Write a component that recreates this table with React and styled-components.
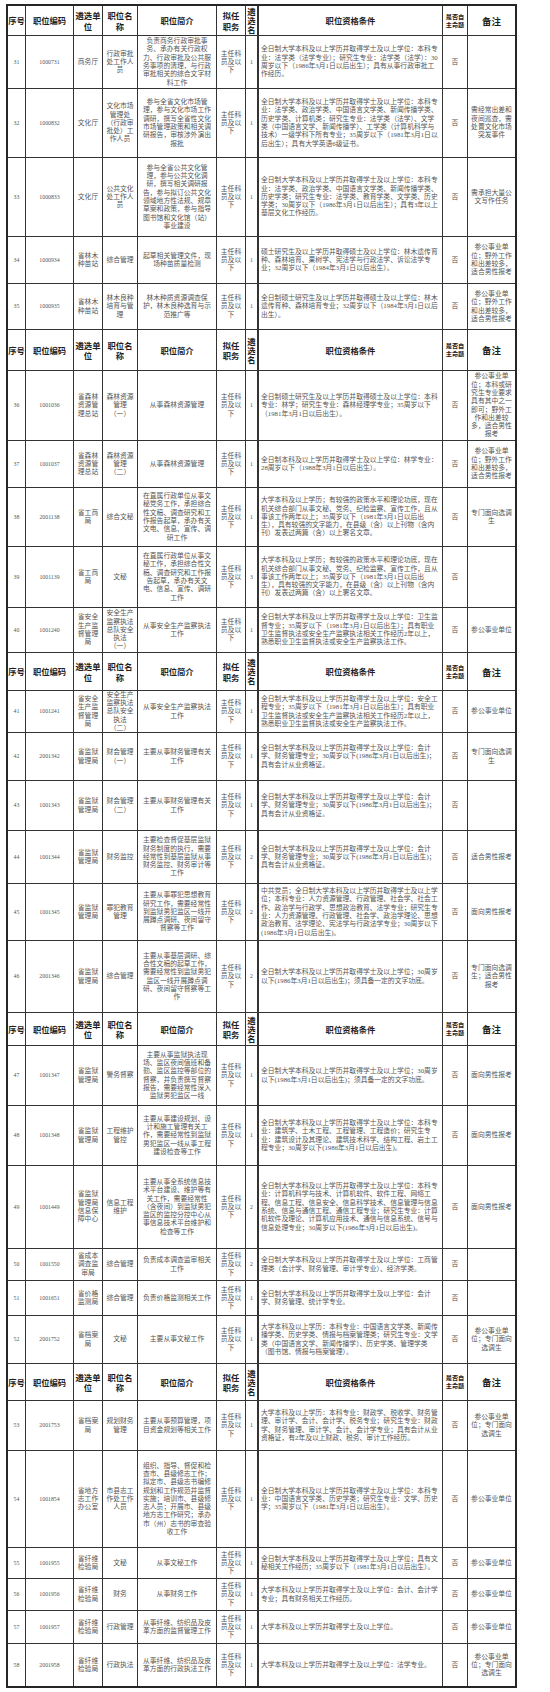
import React from "react";
import styled, { createGlobalStyle } from "styled-components";

const GlobalStyle = createGlobalStyle`
  html, body {
    margin: 0;
    padding: 0;
    background: #ffffff;
  }
  body {
    font-family: "Liberation Serif", "Noto Sans CJK SC", serif;
  }
`;

const COLS = "18px 48px 29px 35px 79px 29px 13px 184px 25px 47px";

const HEAD = [
  { lines: ["序号"] },
  { lines: ["职位编码"] },
  { lines: ["遴选单", "位"] },
  { lines: ["职位名", "称"] },
  { lines: ["职位简介"] },
  { lines: ["拟任", "职务"] },
  { lines: ["遴", "选", "名"], tight: true },
  { lines: ["职位资格条件"] },
  { lines: ["是否自", "主命题"], size: 6.2 },
  { lines: ["备注"], size: 9.5 },
];

const DUTY = "主任科员及以下";
const INSPECT = "全日制大学本科及以上学历并取得学士及以上学位：会计学、财务管理专业；30周岁以下(1986年3月1日以后出生)；具有会计从业资格证。";
const PRISON_WRITE = "全日制大学本科及以上学历并取得学士及以上学位；30周岁以下(1986年3月1日以后出生)；须具备一定的文字功底。";
const FOREST_NOTE = "参公事业单位；野外工作和出差较多，适合男性报考";
const SAFETY_INTRO = "从事安全生产监察执法工作";
const SAFETY_TAIL = "35周岁以下（1981年3月1日以后出生）；具有职业卫生监督执法或安全生产监察执法相关工作经历2年以上，熟悉职业卫生监督执法或安全生产监察执法工作。";
const AIC_COND = "大学本科及以上学历；有较强的政策水平和理论功底，现在机关综合部门从事文秘、党务、纪检监察、宣传工作，且从事该工作两年以上；35周岁以下（1981年3月1日以后出生），具有较强的文字能力，在县级（含）以上刊物（含内刊）发表过两篇（含）以上署名文章。";

const SECTIONS = [
  {
    head: 30,
    rows: [
      {
        no: "31", code: "1000731", unit: "商务厅", name: "行政审批处工作人员",
        intro: "负责商务行政审批事务、承办有关行政权力、行政审批及公共服务事项的清理，与行政审批相关的综合文字材料工作",
        count: "1",
        cond: "全日制大学本科及以上学历并取得学士及以上学位：本科专业：法学类（法学专业）；研究生专业：法学类（法学）：30周岁以下（1986年3月1日以后出生）；具有从事行政审批工作经历。",
        note: "", h: 53,
      },
      {
        no: "32", code: "1000832", unit: "文化厅", name: "文化市场管理处（行政审批处）工作人员",
        intro: "参与全省文化市场管理，参与文化市场工作调研，撰写全省性文化市场管理政策和相关调研报告，审核涉外演出报批",
        count: "1",
        cond: "全日制大学本科及以上学历并取得学士及以上学位：本科专业：法学类、政治学类、中国语言文学类、新闻传播学类、历史学类、计算机类；研究生专业：法学类（法学）、文学类（中国语言文学、新闻传播学）、工学类（计算机科学与技术）一级学科下所有专业；35周岁以下（1981年3月1日以后出生）；具有大学英语6级证书。",
        note: "需经常出差和夜间巡查，需处置文化市场突发事件", h: 69,
      },
      {
        no: "33", code: "1000833", unit: "文化厅", name: "公共文化处工作人员",
        intro: "参与全省公共文化管理，参与公共文化调研，撰写相关调研报告，参与拟订公共文化领域地方性法规、规章草案和政策，参与指导图书馆和文化馆（站）事业建设",
        count: "1",
        cond: "全日制大学本科及以上学历并取得学士及以上学位：本科专业：法学类、政治学类、中国语言文学类、新闻传播学类、历史学类；研究生专业：法学类、教育学类、文学类、历史学类；30周岁以下（1986年3月1日以后出生）；具有3年以上基层文化工作经历。",
        note: "需承担大量公文写作任务", h: 79,
      },
      {
        no: "34", code: "1000934", unit: "省林木种苗站", name: "综合管理",
        intro: "起草相关管理文件，现场种苗质量检测",
        count: "1",
        cond: "硕士研究生及以上学历并取得硕士及以上学位：林木遗传育种、森林培育、果树学、宪法学与行政法学、诉讼法学专业；32周岁以下（1984年3月1日以后出生）。",
        note: FOREST_NOTE, h: 47,
      },
      {
        no: "35", code: "1000935", unit: "省林木种苗站", name: "林木良种培育与管理",
        intro: "林木种质资源调查保护，林木良种选育与示范推广等",
        count: "1",
        cond: "全日制硕士研究生及以上学历并取得硕士及以上学位：林木遗传育种、森林培育专业；32周岁以下（1984年3月1日以后出生）。",
        note: FOREST_NOTE, h: 46,
      },
    ],
  },
  {
    head: 41,
    rows: [
      {
        no: "36", code: "1001036", unit: "省森林资源管理总站", name: "森林资源管理（一）",
        intro: "从事森林资源管理",
        count: "1",
        cond: "全日制硕士研究生及以上学历并取得硕士及以上学位：本科专业：林学；研究生专业：森林经理学专业；35周岁以下（1981年3月1日以后出生）。",
        note: "参公事业单位；本科或研究生专业要求具有其中之一即可；野外工作和出差较多，适合男性报考", h: 70,
      },
      {
        no: "37", code: "1001037", unit: "省森林资源管理总站", name: "森林资源管理（二）",
        intro: "从事森林资源管理",
        count: "1",
        cond: "全日制本科及以上学历并取得学士及以上学位：林学专业：28周岁以下（1988年3月1日以后出生）。",
        note: FOREST_NOTE, h: 47,
      },
      {
        no: "38", code: "2001138", unit: "省工商局", name: "综合文秘",
        intro: "在直属行政单位从事文秘党务工作，承担综合性文稿、调查研究和工作报告起草，承办有关文电、信息、宣传、调研工作",
        count: "1", cond: AIC_COND,
        note: "专门面向选调生", h: 59,
      },
      {
        no: "39", code: "1001139", unit: "省工商局", name: "文秘",
        intro: "在直属行政单位从事文秘工作，承担综合性文稿、调查研究和工作报告起草，承办有关文电、信息、宣传、调研工作",
        count: "3", cond: AIC_COND,
        note: "", h: 61,
      },
      {
        no: "40", code: "1001240", unit: "省安全生产监督管理局", name: "安全生产监察执法总队安全执法（一）",
        intro: SAFETY_INTRO,
        count: "1",
        cond: "全日制大学本科及以上学历并取得学士及以上学位：卫生监督专业；" + SAFETY_TAIL,
        note: "参公事业单位", h: 45,
      },
    ],
  },
  {
    head: 38,
    rows: [
      {
        no: "41", code: "1001241", unit: "省安全生产监督管理局", name: "安全生产监察执法总队安全执法（二）",
        intro: SAFETY_INTRO,
        count: "1",
        cond: "全日制大学本科及以上学历并取得学士及以上学位：安全工程专业；" + SAFETY_TAIL,
        note: "参公事业单位", h: 42,
      },
      {
        no: "42", code: "2001342", unit: "省监狱管理局", name: "财会管理（一）",
        intro: "主要从事财务管理有关工作",
        count: "1", cond: INSPECT,
        note: "专门面向选调生", h: 48,
      },
      {
        no: "43", code: "1001343", unit: "省监狱管理局", name: "财会管理（二）",
        intro: "主要从事财务管理有关工作",
        count: "1", cond: INSPECT,
        note: "", h: 50,
      },
      {
        no: "44", code: "1001344", unit: "省监狱管理局", name: "财务监控",
        intro: "主要检查督促基层监狱财务制度的执行，需要经常性到基层监狱从事财务监控、财务审计等工作",
        count: "2", cond: INSPECT,
        note: "适合男性报考", h: 53,
      },
      {
        no: "45", code: "1001345", unit: "省监狱管理局", name: "罪犯教育管理",
        intro: "主要从事罪犯思想教育研究工作，需要经常性到监狱男犯监区一线开展蹲点调研、夜间留守督察等工作",
        count: "2",
        cond: "中共党员；全日制大学本科及以上学历并取得学士及以上学位；本科专业：人力资源管理、行政管理、社会学、社会工作、政治学与行政学、思想政治教育、法学专业；研究生专业：人力资源管理、行政管理、社会学、政治学理论、思想政治教育、法学理论、宪法学与行政法学专业；30周岁以下(1986年3月1日以后出生)。",
        note: "面向男性报考", h: 57,
      },
      {
        no: "46", code: "2001346", unit: "省监狱管理局", name: "综合管理",
        intro: "主要从事基层调研、综合性文稿的起草工作，需要经常性到监狱男犯监区一线开展蹲点调研、夜间留守督察等工作",
        count: "2", cond: PRISON_WRITE,
        note: "专门面向选调生；适合男性报考", h: 72,
      },
    ],
  },
  {
    head: 33,
    rows: [
      {
        no: "47", code: "1001347", unit: "省监狱管理局", name: "警务督察",
        intro: "主要从事监狱执法现场、监区夜间值班和备勤、监区监控等部位的督察，并负责撰写督察报告，需要经常性深入监狱男犯监区一线",
        count: "1", cond: PRISON_WRITE,
        note: "面向男性报考", h: 60,
      },
      {
        no: "48", code: "1001348", unit: "省监狱管理局", name: "工程维护管控",
        intro: "主要从事建设规划、设计和施工管理有关工作，需要经常性到监狱男犯监区一线从事工程建设检查等工作",
        count: "1",
        cond: "全日制大学本科及以上学历并取得学士及以上学位：本科专业：建筑学、土木工程、工程管理、工程造价；研究生专业：建筑设计及其理论、建筑技术科学、结构工程、岩土工程专业；30周岁以下(1986年3月1日以后出生)。",
        note: "面向男性报考", h: 60,
      },
      {
        no: "49", code: "1001449", unit: "省监狱管理局信息保障中心", name: "信息工程维护",
        intro: "主要从事全系统信息技术平台建设、维护等有关工作，需要经常性（含夜间）到监狱男犯监区的监控分控中心从事信息技术平台维护和检查等工作",
        count: "2",
        cond: "全日制大学本科及以上学历并取得学士及以上学位：本科专业：计算机科学与技术、计算机软件、软件工程、网络工程、信息工程、信息安全、信息科学技术、信息管理与信息系统、信息与通信工程、通信工程专业；研究生专业：计算机软件及理论、计算机应用技术、通信与信息系统、信号与信息处理专业；30周岁以下(1986年3月1日以后出生)。",
        note: "面向男性报考", h: 83,
      },
      {
        no: "50", code: "1001550", unit: "省成本调查监审局", name: "综合管理",
        intro: "负责成本调查监审相关工作",
        count: "2",
        cond: "全日制大学本科及以上学历并取得学士及以上学位：工商管理类（会计学、财务管理、审计学专业）、经济学类。",
        note: "", h: 32,
      },
      {
        no: "51", code: "1001651", unit: "省价格监测局", name: "综合管理",
        intro: "负责价格监测相关工作",
        count: "1",
        cond: "全日制大学本科及以上学历并取得学士及以上学位：会计学、财务管理、统计学专业。",
        note: "", h: 35,
      },
      {
        no: "52", code: "2001752", unit: "省档案局", name: "文秘",
        intro: "主要从事文秘工作",
        count: "1",
        cond: "大学本科及以上学历：本科专业：中国语言文学类、新闻传播学类、历史学类、情报与档案管理类；研究生专业：文学类（中国语言文学、新闻传播学）、历史学类、管理学类（图书馆、情报与档案管理）。",
        note: "参公事业单位；专门面向选调生", h: 48,
      },
    ],
  },
  {
    head: 37,
    rows: [
      {
        no: "53", code: "2001753", unit: "省档案局", name: "规划财务管理",
        intro: "主要从事预算管理，项目资金规划等相关工作",
        count: "1",
        cond: "大学本科及以上学历：本科专业：财政学、税收学、财务管理、审计学、会计、会计学、税务专业；研究生专业：财政学、财务管理、审计学、会计、会计学专业；具有会计从业资格证，有2年及以上财政、税务、审计工作经历。",
        note: "参公事业单位；专门面向选调生", h: 50,
      },
      {
        no: "54", code: "1001854", unit: "省地方志工作办公室", name: "市县志工作处工作人员",
        intro: "组织、指导、督促和检查市、县级修志工作；拟定市、县级志书编修规划和工作规范并监督实施；培训市、县级修志人员；开展市、县级地方志工作研究；承办市（州）志书的审查验收工作",
        count: "1",
        cond: "全日制大学本科及以上学历并取得学士及以上学位：本科专业：中国语言文学类、历史学类；研究生专业：文学、历史学；35周岁以下（1981年3月1日以后出生）。",
        note: "参公事业单位", h: 97,
      },
      {
        no: "55", code: "1001955", unit: "省纤维检验局", name: "文秘",
        intro: "从事文秘工作",
        count: "1",
        cond: "全日制大学本科及以上学历并取得学士及以上学位；具有文秘相关工作经历；35周岁以下（1981年3月1日以后出生）。",
        note: "参公事业单位", h: 31,
      },
      {
        no: "56", code: "1001956", unit: "省纤维检验局", name: "财务",
        intro: "从事财务工作",
        count: "1",
        cond: "大学本科及以上学历并取得学士及以上学位：会计、会计学专业；具有财务相关工作经历。",
        note: "参公事业单位", h: 32,
      },
      {
        no: "57", code: "1001957", unit: "省纤维检验局", name: "行政管理",
        intro: "从事纤维、纺织品及皮革方面的监督管理工作",
        count: "1",
        cond: "大学本科及以上学历并取得学士及以上学位。",
        note: "参公事业单位", h: 33,
      },
      {
        no: "58", code: "2001958", unit: "省纤维检验局", name: "行政执法",
        intro: "从事纤维、纺织品及皮革方面的行政执法工作",
        count: "1",
        cond: "大学本科及以上学历并取得学士及以上学位：法学专业。",
        note: "参公事业单位；专门面向选调生", h: 42,
      },
    ],
  },
];

function App() {
  return (
    <Page>
      <GlobalStyle />
      <Table>
        {SECTIONS.map((section, si) => (
          <React.Fragment key={si}>
            <Row $h={section.head}>
              {HEAD.map((c, ci) => (
                <HeadCell key={ci} $size={c.size} $tight={c.tight}>
                  <span>
                    {c.lines.map((l, li) => (
                      <React.Fragment key={li}>
                        {li > 0 && <br />}
                        {l}
                      </React.Fragment>
                    ))}
                  </span>
                </HeadCell>
              ))}
            </Row>
            {section.rows.map((r) => (
              <Row key={r.no} $h={r.h}>
                <Cell $num><span>{r.no}</span></Cell>
                <Cell $num><span>{r.code}</span></Cell>
                <Cell><span>{r.unit}</span></Cell>
                <Cell><span>{r.name}</span></Cell>
                <Cell $pad={3}><span>{r.intro}</span></Cell>
                <Cell><span>{DUTY}</span></Cell>
                <Cell $num $pad={0}><span>{r.count}</span></Cell>
                <Cell $left><span>{r.cond}</span></Cell>
                <Cell><span>否</span></Cell>
                <Cell><span>{r.note}</span></Cell>
              </Row>
            ))}
          </React.Fragment>
        ))}
      </Table>
    </Page>
  );
}

const Page = styled.div`
  padding: 4px 0 6px 6px;
  background: #ffffff;
`;

const Table = styled.div`
  width: 511px;
  box-sizing: border-box;
  border: 2px solid #262626;
  background: #ffffff;
`;

const Row = styled.div`
  display: grid;
  grid-template-columns: ${COLS};
  height: ${({ $h }) => $h}px;
  box-sizing: border-box;
  border-bottom: 1px solid #333333;
  &:last-child {
    border-bottom: none;
  }
`;

const Cell = styled.div`
  display: flex;
  align-items: center;
  justify-content: ${({ $left }) => ($left ? "flex-start" : "center")};
  text-align: ${({ $left }) => ($left ? "left" : "center")};
  box-sizing: border-box;
  min-width: 0;
  overflow: hidden;
  padding: 0 ${({ $pad }) => ($pad === undefined ? 2 : $pad)}px;
  border-right: 1px solid #333333;
  font-family: "Liberation Serif", "Noto Sans CJK SC", serif;
  font-size: ${({ $num }) => ($num ? "5.8px" : "6.8px")};
  line-height: 8.3px;
  color: #555555;
  word-break: break-all;
  &:nth-child(7) {
    border-right: 2px solid #333333;
  }
  &:last-child {
    border-right: none;
  }
`;

const HeadCell = styled.div`
  display: flex;
  align-items: center;
  justify-content: center;
  text-align: center;
  box-sizing: border-box;
  min-width: 0;
  overflow: hidden;
  padding: 0;
  border-right: 1px solid #333333;
  font-family: "Noto Sans CJK SC", sans-serif;
  font-weight: 700;
  font-size: ${({ $size }) => $size || 8.3}px;
  line-height: ${({ $tight, $size }) => ($tight ? "9px" : $size ? "8px" : "10.5px")};
  color: #1e1e1e;
  white-space: nowrap;
  &:nth-child(7) {
    border-right: 2px solid #333333;
  }
  &:last-child {
    border-right: none;
  }
`;

export default App;
